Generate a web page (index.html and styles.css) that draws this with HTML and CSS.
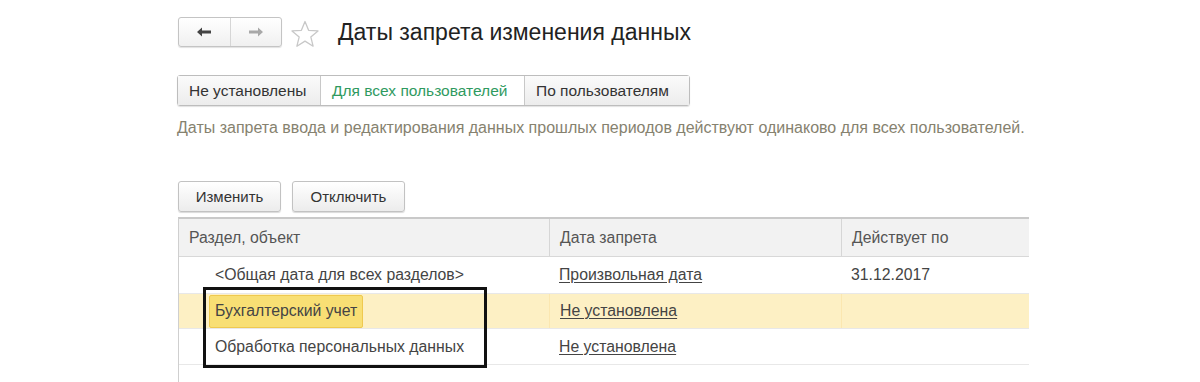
FILE: index.html
```html
<!DOCTYPE html>
<html>
<head>
    <meta charset="utf-8">
    <title>Даты запрета изменения данных</title>
    <link rel="stylesheet" href="styles.css">
</head>
<body>
    <div class="page">
        <div class="header">
            <div class="nav">
                <span class="nav-btn back">
                    <svg width="16" height="12" viewBox="0 0 16 12"><path d="M1 6 L6 1.5 L6 4.5 L15 4.5 L15 7.5 L6 7.5 L6 10.5 Z" fill="#444"/></svg>
                </span>
                <span class="nav-btn fwd">
                    <svg width="16" height="12" viewBox="0 0 16 12"><path d="M15 6 L10 1.5 L10 4.5 L1 4.5 L1 7.5 L10 7.5 L10 10.5 Z" fill="#a8a8a8"/></svg>
                </span>
            </div>
            <svg class="star" width="30" height="28" viewBox="0 0 30 28"><path d="M15 1.5 L18.6 10.3 L28 10.9 L20.8 16.9 L23.1 26.2 L15 21.1 L6.9 26.2 L9.2 16.9 L2 10.9 L11.4 10.3 Z" fill="none" stroke="#c8c8c8" stroke-width="1.3" stroke-linejoin="round"/></svg>
            <h1>Даты запрета изменения данных</h1>
        </div>

        <div class="tabs">
            <span class="tab">Не установлены</span>
            <span class="tab active">Для всех пользователей</span>
            <span class="tab">По пользователям</span>
        </div>

        <p class="hint">Даты запрета ввода и редактирования данных прошлых периодов действуют одинаково для всех пользователей.</p>

        <div class="toolbar">
            <button class="btn">Изменить</button>
            <button class="btn">Отключить</button>
        </div>

        <div class="grid">
            <div class="row head">
                <div class="cell">Раздел, объект</div>
                <div class="cell">Дата запрета</div>
                <div class="cell">Действует по</div>
            </div>
            <div class="row r1">
                <div class="cell sub">&lt;Общая дата для всех разделов&gt;</div>
                <div class="cell"><a>Произвольная дата</a></div>
                <div class="cell">31.12.2017</div>
            </div>
            <div class="row r2 selected">
                <div class="cell sub"><span class="current">Бухгалтерский учет</span></div>
                <div class="cell"><a>Не установлена</a></div>
                <div class="cell"></div>
            </div>
            <div class="row r3">
                <div class="cell sub">Обработка персональных данных</div>
                <div class="cell"><a>Не установлена</a></div>
                <div class="cell"></div>
            </div>
            <div class="frame"></div>
        </div>
    </div>
</body>
</html>
```

FILE: styles.css
```css
body {
    margin: 0;
    background: #fff;
    font-family: "Liberation Sans", Arial, sans-serif;
    color: #333;
}
.page {
    padding: 16px 0 0 177px;
}
.header {
    display: flex;
    align-items: center;
    height: 32px;
}
.nav {
    display: flex;
    width: 102px;
    height: 28px;
    margin-left: 1px;
    border: 1px solid #c4c4c4;
    border-radius: 3px;
    background: linear-gradient(#ffffff, #f0f0f0);
    box-shadow: 0 1px 1px rgba(0,0,0,0.12);
}
.nav-btn {
    flex: 1;
    display: flex;
    align-items: center;
    justify-content: center;
}
.nav-btn.back {
    border-right: 1px solid #d6d6d6;
}
.star {
    margin-left: 8px;
    margin-top: 4px;
}
h1 {
    margin: 0 0 0 18px;
    font-size: 23px;
    font-weight: normal;
    color: #222;
}
.tabs {
    display: flex;
    width: max-content;
    margin-top: 27px;
    border: 1px solid #bdbdbd;
    border-radius: 3px;
    box-shadow: 0 1px 1px rgba(0,0,0,0.12);
}
.tab {
    height: 29px;
    line-height: 29px;
    padding: 0 11px;
    font-size: 15.5px;
    color: #333;
    background: linear-gradient(#fbfbfb, #ececec);
    border-left: 1px solid #c8c8c8;
}
.tab:first-child {
    border-left: none;
    width: 120px;
}
.tab.active {
    background: #fff;
    color: #2f9a5f;
    width: 181px;
}
.tab:last-child {
    width: 142px;
}
.hint {
    margin: 13px 0 0;
    font-size: 16px;
    color: #86826f;
}
.toolbar {
    display: flex;
    gap: 11px;
    margin-top: 44px;
    margin-left: 1px;
}
.btn {
    height: 31px;
    padding: 0;
    font-family: inherit;
    font-size: 15px;
    color: #333;
    border: 1px solid #c2c2c2;
    border-radius: 3px;
    background: linear-gradient(#ffffff, #ececec);
    box-shadow: 0 1px 1px rgba(0,0,0,0.15);
}
.btn:first-child {
    width: 103px;
}
.btn:last-child {
    width: 113px;
}
.grid {
    position: relative;
    width: 850px;
    margin-top: 5px;
    margin-left: 1px;
    padding-bottom: 30px;
    border-top: 2px solid #c9c9c9;
    border-left: 1px solid #cfcfcf;
    font-size: 15.8px;
}
.row {
    display: grid;
    grid-template-columns: 370px 292px 1fr;
    border-bottom: 1px solid #e8e8e8;
}
.row.head {
    height: 37px;
    background: #f2f2f2;
    border-bottom: 1px solid #d8d8d8;
}
.row.r1 {
    height: 36px;
}
.row.r2 {
    height: 34px;
}
.row.r3 {
    height: 35px;
}
.row.head .cell + .cell {
    border-left: 1px solid #d6d6d6;
}
.row.selected {
    background: #fdf0c4;
}
.row.selected .cell + .cell {
    border-left: 1px solid #fbe7b0;
}
.cell {
    display: flex;
    align-items: center;
    padding-left: 10px;
    color: #444;
}
.cell.sub {
    padding-left: 36px;
}
.row.head .cell {
    color: #555;
}
a {
    color: #444;
    text-decoration: underline;
    text-underline-offset: 2px;
}
.current {
    margin-left: -6px;
    padding: 6px 5px 7px;
    background: #f8df74;
    border: 1px solid #efc94f;
    border-radius: 2px;
}
.frame {
    position: absolute;
    left: 24px;
    top: 68px;
    width: 278px;
    height: 75px;
    border: 3px solid #111;
    pointer-events: none;
}
```
